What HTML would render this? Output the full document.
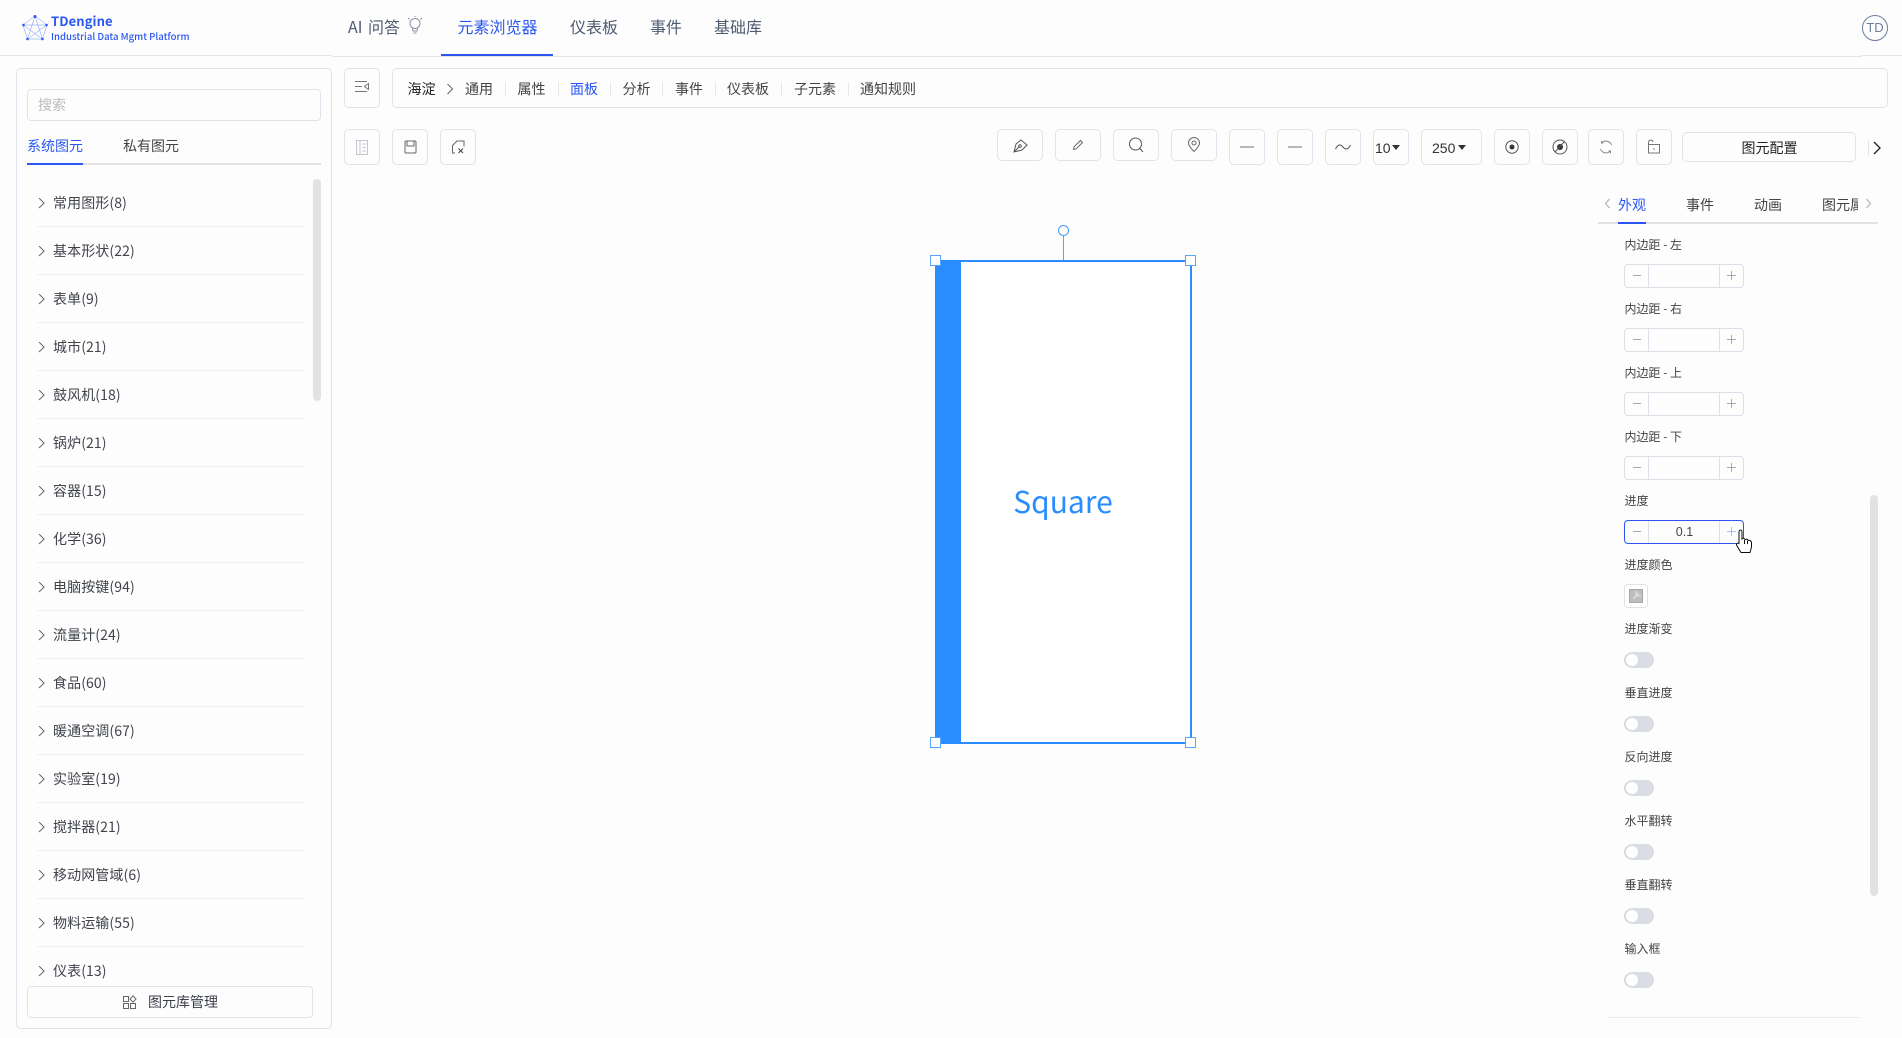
<!DOCTYPE html>
<html lang="zh"><head><meta charset="utf-8"><title>TDengine</title>
<style>
*{box-sizing:border-box}
html,body{margin:0;padding:0}
body{width:1902px;height:1038px;overflow:hidden;position:relative;background:#fdfdfe;font-family:"Noto Sans CJK SC","Liberation Sans",sans-serif;color:#333;font-size:14px}
.a,.t,.b,svg.i{position:absolute}
.t{white-space:nowrap;line-height:20px;height:20px}
.b{border:1px solid #e1e3ec;border-radius:5px;background:#fdfdfe}
.nav{font-size:16px;color:#4d5a70}
.row{left:53px;color:#3f434a;letter-spacing:.1px}
.sep{position:absolute;left:37px;width:266px;height:1px;background:#eeeef4}
.crumb{color:#444}
.vs{position:absolute;top:82px;width:1px;height:14px;background:#e6e8f0}
.lab{font-size:12px;left:1624.5px;color:#444}
.step{position:absolute;left:1624px;width:120px;height:24px;border:1px solid #dcdee8;border-radius:4px;background:#fdfdfe}
.step:before,.step:after{content:"";position:absolute;top:0;bottom:0;width:1px;background:#dcdee8}
.step:before{left:23px}.step:after{left:94px}
.step i{position:absolute;top:10px;height:1px;width:8px;background:#aaa;left:8px}
.step b{position:absolute;top:6px;left:102px;width:9px;height:9px;background:linear-gradient(#aaa,#aaa) center/9px 1px no-repeat,linear-gradient(#aaa,#aaa) center/1px 9px no-repeat}
.tog{position:absolute;left:1624px;width:30px;height:16px;border-radius:8px;background:#d9dce5}
.tog:after{content:"";position:absolute;left:2px;top:2px;width:12px;height:12px;border-radius:50%;background:#fff}
.h{position:absolute;width:11px;height:11px;background:#fff;border:1px solid #5aa5f7}
svg.i{fill:none;stroke:#666;stroke-width:1}
</style></head><body>

<!-- header -->
<div class="a" style="left:0;top:55px;width:332px;height:1px;background:#e4e5ea"></div>
<div class="a" style="left:332px;top:56px;width:1530px;height:1px;background:#e4e5ec"></div>
<div class="a" style="left:1861px;top:55px;width:41px;height:1px;background:#e4e5ea"></div>
<div class="a" style="left:441px;top:54px;width:112px;height:2px;background:#2b57f0"></div>
<svg class="i" style="left:21px;top:14px;stroke:#6f8ff5;stroke-width:.5" width="28" height="27" viewBox="0 0 28 27"><path d="M14 2L26 11L21.500 25H6.500L2 11Z"/><path d="M14 2L21.500 25L2 11H26L6.500 25Z"/><g fill="#2b57f0" stroke="none"><circle cx="14" cy="2.500" r="1.500"/><circle cx="25.500" cy="11" r="1.300"/><circle cx="21.500" cy="25" r="1.300"/><circle cx="6.500" cy="25" r="1.300"/><circle cx="2.500" cy="11" r="1.300"/></g></svg>
<div class="t" style="left:51px;top:10.500px;font-size:13px;font-weight:700;color:#2b57f0;letter-spacing:.1px">TDengine</div>
<div class="t" style="left:51px;top:25.500px;font-size:9.600px;font-weight:500;color:#2b57f0">Industrial Data Mgmt Platform</div>
<div class="t nav" style="left:348px;top:16px;word-spacing:2px">AI 问答</div>
<svg class="i" style="left:406px;top:16px;stroke:#8a93a3" width="18" height="20" viewBox="0 0 18 20"><circle cx="9" cy="7.500" r="5"/><path d="M6.500 12.500L7 15H11L11.500 12.500M7.500 17H10.500M2 2L3.500 3.500M16 2L14.500 3.500M9 1V0"/></svg>
<div class="t nav" style="left:457.500px;top:16px;color:#2b57f0">元素浏览器</div>
<div class="t nav" style="left:570px;top:16px">仪表板</div>
<div class="t nav" style="left:650px;top:16px">事件</div>
<div class="t nav" style="left:714px;top:16px">基础库</div>
<div class="a" style="left:1862px;top:15px;width:26px;height:26px;border:1px solid #6d7f9c;border-radius:50%;text-align:center;line-height:24px;font-size:13px;color:#6d7f9c;font-family:'Liberation Sans',sans-serif">TD</div>

<!-- left panel -->
<div class="b" style="left:16px;top:68px;width:316px;height:961px"></div>
<div class="b" style="left:27px;top:89px;width:294px;height:32px;border-radius:4px"></div>
<div class="t" style="left:38px;top:95px;color:#bbb">搜索</div>
<div class="t" style="left:27px;top:136px;color:#2b57f0">系统图元</div>
<div class="t" style="left:123px;top:136px;color:#444">私有图元</div>
<div class="a" style="left:27px;top:163px;width:294px;height:2px;background:#e2e2e6"></div>
<div class="a" style="left:27px;top:163px;width:56px;height:2px;background:#2b57f0"></div>
<div class="a" style="left:313px;top:179px;width:8px;height:222px;border-radius:4px;background:#e2e2e5"></div>

<div class="t row" style="top:193px">常用图形(8)</div><div class="sep" style="top:226px"></div>
<div class="t row" style="top:241px">基本形状(22)</div><div class="sep" style="top:274px"></div>
<div class="t row" style="top:289px">表单(9)</div><div class="sep" style="top:322px"></div>
<div class="t row" style="top:337px">城市(21)</div><div class="sep" style="top:370px"></div>
<div class="t row" style="top:385px">鼓风机(18)</div><div class="sep" style="top:418px"></div>
<div class="t row" style="top:433px">锅炉(21)</div><div class="sep" style="top:466px"></div>
<div class="t row" style="top:481px">容器(15)</div><div class="sep" style="top:514px"></div>
<div class="t row" style="top:529px">化学(36)</div><div class="sep" style="top:562px"></div>
<div class="t row" style="top:577px">电脑按键(94)</div><div class="sep" style="top:610px"></div>
<div class="t row" style="top:625px">流量计(24)</div><div class="sep" style="top:658px"></div>
<div class="t row" style="top:673px">食品(60)</div><div class="sep" style="top:706px"></div>
<div class="t row" style="top:721px">暖通空调(67)</div><div class="sep" style="top:754px"></div>
<div class="t row" style="top:769px">实验室(19)</div><div class="sep" style="top:802px"></div>
<div class="t row" style="top:817px">搅拌器(21)</div><div class="sep" style="top:850px"></div>
<div class="t row" style="top:865px">移动网管域(6)</div><div class="sep" style="top:898px"></div>
<div class="t row" style="top:913px">物料运输(55)</div><div class="sep" style="top:946px"></div>
<div class="t row" style="top:961px">仪表(13)</div>
<svg class="i" style="left:37px;top:190px;stroke:#666" width="9" height="800" viewBox="0 0 9 800"><path d="M2 8L7 13L2 18M2 56L7 61L2 66M2 104L7 109L2 114M2 152L7 157L2 162M2 200L7 205L2 210M2 248L7 253L2 258M2 296L7 301L2 306M2 344L7 349L2 354M2 392L7 397L2 402M2 440L7 445L2 450M2 488L7 493L2 498M2 536L7 541L2 546M2 584L7 589L2 594M2 632L7 637L2 642M2 680L7 685L2 690M2 728L7 733L2 738M2 776L7 781L2 786"/></svg>
<div class="b" style="left:27px;top:986px;width:286px;height:32px;border-radius:4px"></div>
<svg class="i" style="left:122px;top:995px" width="15" height="15" viewBox="0 0 15 15"><rect x="1.500" y="1.500" width="5" height="5"/><rect x="1.500" y="8.500" width="5" height="5"/><rect x="8.500" y="8.500" width="5" height="5"/><path d="M11 .8L14 4L11 7.200L8 4Z"/></svg>
<div class="t" style="left:148px;top:992px;color:#3a3f48">图元库管理</div>

<!-- breadcrumb -->
<div class="b" style="left:344px;top:68px;width:36px;height:40px"></div>
<svg class="i" style="left:354px;top:80px;stroke:#777" width="16" height="13" viewBox="0 0 16 13"><path d="M1 1.500H13M1 6.500H8M1 11.500H13M14.500 3.500L10.500 6.500L14.500 9.500Z"/></svg>
<div class="b" style="left:392px;top:68px;width:1496px;height:40px"></div>
<div class="t crumb" style="left:407.500px;top:79px;color:#222">海淀</div>
<svg class="i" style="left:445px;top:82px;stroke:#666" width="10" height="14" viewBox="0 0 10 14"><path d="M2.500 2L7.500 7L2.500 12"/></svg>
<div class="t crumb" style="left:465px;top:79px">通用</div><div class="vs" style="left:505px"></div>
<div class="t crumb" style="left:517.500px;top:79px">属性</div><div class="vs" style="left:558px"></div>
<div class="t crumb" style="left:570px;top:79px;color:#2b57f0">面板</div><div class="vs" style="left:610px"></div>
<div class="t crumb" style="left:622.500px;top:79px">分析</div><div class="vs" style="left:662px"></div>
<div class="t crumb" style="left:675px;top:79px">事件</div><div class="vs" style="left:715px"></div>
<div class="t crumb" style="left:727px;top:79px">仪表板</div><div class="vs" style="left:781px"></div>
<div class="t crumb" style="left:794px;top:79px">子元素</div><div class="vs" style="left:848px"></div>
<div class="t crumb" style="left:860px;top:79px">通知规则</div>

<!-- toolbar left -->
<div class="b" style="left:344px;top:129px;width:36px;height:36px"></div>
<svg class="i" style="left:355px;top:140px;stroke:#c2c8d2" width="14" height="15" viewBox="0 0 14 15"><rect x="1.500" y=".5" width="11" height="14"/><path d="M5 .5V14.500M7.500 4H11M7.500 7.500H11M7.500 11H11"/></svg>
<div class="b" style="left:392px;top:129px;width:36px;height:36px"></div>
<svg class="i" style="left:402.500px;top:140px;stroke:#666" width="14" height="14" viewBox="0 0 14 14"><rect x="2" y="1" width="11" height="12" rx="1"/><path d="M4 1V6H11V1"/></svg>
<div class="b" style="left:440px;top:129px;width:36px;height:36px"></div>
<svg class="i" style="left:451px;top:140px;stroke:#666" width="15" height="14" viewBox="0 0 15 14"><path d="M4 13H1.500V5.500L6 1H13V6.500"/><path d="M7.500 8.500L12 13M12 8.500L7.500 13" stroke="#444"/></svg>

<!-- toolbar right -->
<div class="b" style="left:997px;top:129px;width:46px;height:32px"></div>
<svg class="i" style="left:1013px;top:138px;stroke:#555" width="15" height="15" viewBox="0 0 15 15"><path d="M1 14L3 6L8 2L14 7L9 12ZM1 14L6 9"/><circle cx="7" cy="8" r="1.300"/></svg>
<div class="b" style="left:1055px;top:129px;width:46px;height:32px"></div>
<svg class="i" style="left:1072px;top:139px;stroke:#666" width="12" height="12" viewBox="0 0 12 12"><path d="M1.500 10.500L2.200 7.500L8.500 1.500L10.500 3.500L4.300 9.800Z"/></svg>
<div class="b" style="left:1113px;top:129px;width:46px;height:32px"></div>
<svg class="i" style="left:1128px;top:137px;stroke:#555" width="16" height="16" viewBox="0 0 16 16"><circle cx="7.500" cy="7" r="6"/><path d="M12 11.500L15 15"/></svg>
<div class="b" style="left:1171px;top:129px;width:46px;height:32px"></div>
<svg class="i" style="left:1187px;top:137px;stroke:#666" width="14" height="15" viewBox="0 0 14 15"><path d="M7 14.500C3.500 11 1.500 8.500 1.500 6A5.500 5.500 0 0 1 12.500 6C12.500 8.500 10.500 11 7 14.500Z"/><circle cx="7" cy="6" r="2"/></svg>
<div class="b" style="left:1229px;top:129px;width:36px;height:36px"></div>
<div class="a" style="left:1240px;top:146px;width:14px;height:2px;background:#b8b8b8"></div>
<div class="b" style="left:1277px;top:129px;width:36px;height:36px"></div>
<div class="a" style="left:1288px;top:146px;width:14px;height:2px;background:#b8b8b8"></div>
<div class="b" style="left:1325px;top:129px;width:36px;height:36px"></div>
<svg class="i" style="left:1335px;top:142px;stroke:#555" width="16" height="10" viewBox="0 0 16 10"><path d="M.5 7C3 2 5.500 2 8 5S13 8 15.500 3"/></svg>
<div class="b" style="left:1373px;top:129px;width:36px;height:36px"></div>
<div class="t" style="left:1375px;top:138px;font-family:'Liberation Sans',sans-serif;color:#333">10</div>
<svg class="i" style="left:1392px;top:145px;stroke:none;fill:#333" width="8" height="5" viewBox="0 0 8 5"><path d="M0 0H8L4 5Z"/></svg>
<div class="b" style="left:1421px;top:129px;width:61px;height:36px"></div>
<div class="t" style="left:1432px;top:138px;font-family:'Liberation Sans',sans-serif;color:#333">250</div>
<svg class="i" style="left:1458px;top:145px;stroke:none;fill:#333" width="8" height="5" viewBox="0 0 8 5"><path d="M0 0H8L4 5Z"/></svg>
<div class="b" style="left:1494px;top:129px;width:36px;height:36px"></div>
<svg class="i" style="left:1505px;top:140px;stroke:#555" width="14" height="14" viewBox="0 0 14 14"><circle cx="7" cy="7" r="6.200"/><circle cx="7" cy="7" r="2.500" fill="#333" stroke="none"/></svg>
<div class="b" style="left:1542px;top:129px;width:36px;height:36px"></div>
<svg class="i" style="left:1552px;top:139px;stroke:#555" width="16" height="16" viewBox="0 0 16 16"><circle cx="8" cy="8" r="7"/><circle cx="8" cy="8" r="3" fill="#333" stroke="none"/><path d="M12.500 2.500L3 13"/></svg>
<div class="b" style="left:1588px;top:129px;width:36px;height:36px"></div>
<svg class="i" style="left:1599px;top:140px;stroke:#888" width="14" height="14" viewBox="0 0 14 14"><path d="M12.500 5A6 6 0 0 0 3 2.500M1.500 9A6 6 0 0 0 11 11.500M2.500 .8V3H4.500M11.500 13.200V11H9.500"/></svg>
<div class="b" style="left:1636px;top:129px;width:36px;height:36px"></div>
<svg class="i" style="left:1646px;top:139px;stroke:#777" width="15" height="15" viewBox="0 0 15 15"><rect x="2.500" y="5.500" width="11" height="8.500"/><path d="M2.500 5V3A2.300 2.300 0 0 1 7 3"/><path d="M8 9V11" stroke="#c07030"/></svg>
<div class="b" style="left:1682px;top:132px;width:174px;height:30px"></div>
<div class="t" style="left:1741.500px;top:137.500px;color:#222">图元配置</div>
<div class="a" style="left:1868px;top:140px;width:1px;height:15px;background:#dfe2ea"></div>
<svg class="i" style="left:1872px;top:139.500px;stroke:#222;stroke-width:1.300" width="10" height="16" viewBox="0 0 10 16"><path d="M2 2L8 8L2 14"/></svg>

<!-- right panel tabs -->
<svg class="i" style="left:1604px;top:198px;stroke:#aaa" width="7" height="11" viewBox="0 0 7 11"><path d="M5.500 1L1.500 5.500L5.500 10"/></svg>
<div class="t" style="left:1618px;top:195px;color:#2b57f0">外观</div>
<div class="t" style="left:1686px;top:195px;color:#444">事件</div>
<div class="t" style="left:1754px;top:195px;color:#444">动画</div>
<div class="a" style="left:1822px;top:195px;width:36px;height:20px;overflow:hidden"><span class="t" style="left:0;top:0;color:#444">图元属性</span></div>
<svg class="i" style="left:1865px;top:198px;stroke:#aaa" width="7" height="11" viewBox="0 0 7 11"><path d="M1.500 1L5.500 5.500L1.500 10"/></svg>
<div class="a" style="left:1598px;top:222px;width:280px;height:2px;background:#e2e2e6"></div>
<div class="a" style="left:1618px;top:222px;width:28px;height:2px;background:#2b57f0"></div>

<div class="t lab" style="top:235px">内边距 - 左</div>
<div class="step" style="top:264px"><i></i><b></b></div>
<div class="t lab" style="top:299px">内边距 - 右</div>
<div class="step" style="top:328px"><i></i><b></b></div>
<div class="t lab" style="top:363px">内边距 - 上</div>
<div class="step" style="top:392px"><i></i><b></b></div>
<div class="t lab" style="top:427px">内边距 - 下</div>
<div class="step" style="top:456px"><i></i><b></b></div>
<div class="t lab" style="top:491px">进度</div>
<div class="step" style="top:520px;border-color:#2b57f0"><i></i><b style="background:linear-gradient(#a9bcf5,#a9bcf5) center/9px 1px no-repeat,linear-gradient(#a9bcf5,#a9bcf5) center/1px 9px no-repeat"></b></div>
<div class="t" style="left:1649px;width:71px;top:522px;text-align:center;font-size:12.500px;font-family:'Liberation Sans',sans-serif;color:#444">0.1</div>
<div class="t lab" style="top:555px">进度颜色</div>
<div class="b" style="left:1624px;top:584px;width:24px;height:24px;border-radius:4px"></div>
<div class="a" style="left:1629px;top:589px;width:14px;height:14px;background:#bdbdbf;border:1px solid #a8a8a8"></div>
<svg class="i" style="left:1630px;top:590px;stroke:#ececec" width="12" height="12" viewBox="0 0 12 12"><path d="M3 9L9 3M6 1V5M7 6H11"/></svg>
<div class="t lab" style="top:619px">进度渐变</div><div class="tog" style="top:652px"></div>
<div class="t lab" style="top:683px">垂直进度</div><div class="tog" style="top:716px"></div>
<div class="t lab" style="top:747px">反向进度</div><div class="tog" style="top:780px"></div>
<div class="t lab" style="top:811px">水平翻转</div><div class="tog" style="top:844px"></div>
<div class="t lab" style="top:875px">垂直翻转</div><div class="tog" style="top:908px"></div>
<div class="t lab" style="top:939px">输入框</div><div class="tog" style="top:972px"></div>
<div class="a" style="left:1608px;top:1017px;width:252px;height:1px;background:#eaeaee"></div>
<div class="a" style="left:1870px;top:495px;width:8px;height:401px;border-radius:4px;background:#e2e2e6"></div>

<!-- canvas shape -->
<div class="a" style="left:935px;top:260px;width:257px;height:484px;background:#fff;border:2px solid #2a8dff"></div>
<div class="a" style="left:935px;top:260px;width:26px;height:484px;background:#2a8dff"></div>
<div class="a" style="left:1063px;top:236px;width:1px;height:24px;background:#5aa5f7"></div>
<div class="a" style="left:1058px;top:225px;width:11px;height:11px;border:1px solid #4b9cf7;border-radius:50%;background:#fff"></div>
<div class="h" style="left:930px;top:255px"></div>
<div class="h" style="left:1185px;top:255px"></div>
<div class="h" style="left:930px;top:737px"></div>
<div class="h" style="left:1185px;top:737px"></div>
<div class="t" style="left:963px;width:200px;top:480px;height:40px;line-height:40px;text-align:center;font-size:30px;color:#2a8dff">Square</div>

<!-- cursor -->
<svg class="a" style="left:1735px;top:529px" width="19" height="25" viewBox="0 0 19 25"><path d="M4.500 1.500C5.500 .5 7 1 7 2.500V10C8 9 9.500 9 10 10.500C11 10 12.500 10 13 11.500C14 11 16.500 11.500 16.500 14V18L15 23.500H6L1.500 16C1 14.500 2.500 13.500 4 14.500V2.500Z" fill="#fff" stroke="#111" stroke-width="1"/><path d="M9.500 11V15M12.500 12V15" stroke="#111" fill="none"/></svg>
</body></html>
